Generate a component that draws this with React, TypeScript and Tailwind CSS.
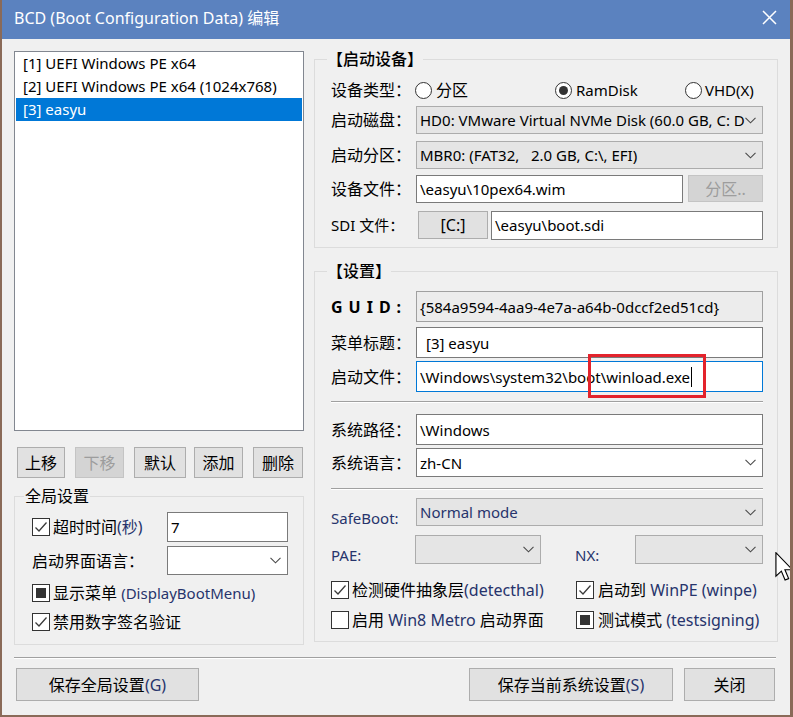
import React from "react";

const font = "font-['Noto_Sans','Noto_Sans_CJK_SC',sans-serif]";
const navy = "text-[#27346c]";

function Chevron() {
  return (
    <svg width="11" height="7" viewBox="0 0 11 7" className="shrink-0">
      <polyline points="0.5,0.8 5.5,5.8 10.5,0.8" fill="none" stroke="#4a4a4a" strokeWidth="1.1" />
    </svg>
  );
}

const Combo = ({
  text,
  className,
  light,
}: {
  text?: React.ReactNode;
  className: string;
  light?: boolean;
}) => (
  <div
    className={`flex items-center pl-[3px] pr-[6px] border ${
      light ? "bg-white border-[#7a7a7a]" : "bg-[#e5e5e5] border-[#acacac]"
    } ${className}`}
  >
    <div className="flex-1 min-w-0 overflow-hidden whitespace-pre text-[15px] leading-[20px]">{text}</div>
    <Chevron />
  </div>
);

const TextBox = ({
  children,
  className,
}: {
  children?: React.ReactNode;
  className: string;
}) => (
  <div
    className={`flex items-center pl-[3px] overflow-hidden whitespace-nowrap text-[15px] leading-[20px] border ${className}`}
  >
    {children}
  </div>
);

const Button = ({
  children,
  className,
  disabled,
}: {
  children: React.ReactNode;
  className: string;
  disabled?: boolean;
}) => (
  <div
    className={`flex items-center justify-center border text-[16px] ${
      disabled
        ? "bg-[#d4d4d4] border-[#c4c4c4] text-[#9d9d9d]"
        : "bg-[#e1e1e1] border-[#adadad] text-black"
    } ${className}`}
  >
    {children}
  </div>
);

const Check = ({ state }: { state: "on" | "off" | "mixed" }) => (
  <span className="w-[18px] h-[18px] border border-[#333333] bg-white flex items-center justify-center shrink-0">
    {state === "on" && (
      <svg width="16" height="16" viewBox="0 0 16 16">
        <polyline points="2.5,8.5 6,12 13.5,3.5" fill="none" stroke="#3a3a3a" strokeWidth="1.3" />
      </svg>
    )}
    {state === "mixed" && <span className="w-[10px] h-[10px] bg-[#333333]" />}
  </span>
);

const Radio = ({ on }: { on?: boolean }) => (
  <span className="w-[17px] h-[17px] rounded-full border border-[#333333] bg-white flex items-center justify-center shrink-0">
    {on && <span className="w-[9px] h-[9px] rounded-full bg-[#333333]" />}
  </span>
);

const Label = ({ children }: { children: React.ReactNode }) => (
  <span className="w-[85px] shrink-0 text-[16px] leading-[20px] whitespace-nowrap">{children}</span>
);

const Sep = ({ className }: { className: string }) => (
  <div className={`h-[2px] border-t border-[#a0a0a0] border-b border-b-white ${className}`} />
);

export default function App() {
  return (
    <div
      className={`${font} relative w-[793px] h-[717px] bg-[#f0f0f0] border-l-2 border-r-[3px] border-b-2 border-[#8a6a58] text-black overflow-hidden`}
    >
      {/* title bar */}
      <div className="h-[39px] bg-[#5b82bf] flex items-center pl-[12px] pr-[13px] text-white">
        <span className="text-[16px] leading-[20px] mb-[3px]">BCD (Boot Configuration Data) 编辑</span>
        <svg width="15" height="15" viewBox="0 0 15 15" className="ml-auto mb-[4px]">
          <path d="M1 1 L14 14 M14 1 L1 14" stroke="white" strokeWidth="1.5" />
        </svg>
      </div>

      <div className="h-[608px] flex pl-[12px]">
        {/* left column */}
        <div className="w-[290px] pt-[12px] flex flex-col">
          <div className="h-[380px] bg-white border border-[#828790] px-[1px] text-[15px]">
            <div className="h-[23px] flex items-center pl-[7px] whitespace-nowrap">[1] UEFI Windows PE x64</div>
            <div className="h-[23px] flex items-center pl-[7px] whitespace-nowrap">[2] UEFI Windows PE x64 (1024x768)</div>
            <div className="h-[23px] flex items-center pl-[7px] whitespace-nowrap bg-[#0078d7] text-white">[3] easyu</div>
          </div>

          <div className="flex mt-[16px] h-[31px] pl-[3px]">
            <Button className="w-[48px]">上移</Button>
            <Button className="w-[49px] ml-[10px]" disabled>下移</Button>
            <Button className="w-[52px] ml-[10px]">默认</Button>
            <Button className="w-[49px] ml-[8px]">添加</Button>
            <Button className="w-[50px] ml-[10px]">删除</Button>
          </div>

          <fieldset className="mt-[8px] border border-[#dcdcdc] pl-[17px] pr-[15px] pb-[10px]">
            <legend className="ml-[-8px] px-[1px] text-[16px] leading-[20px]">全局设置</legend>
            <div className="flex items-center h-[30px] mt-[6px]">
              <Check state="on" />
              <span className="ml-[3px] text-[16px] whitespace-nowrap">
                超时时间<span className={navy}>(秒)</span>
              </span>
              <TextBox className="ml-auto w-[121px] h-[30px] bg-white border-[#7a7a7a]">7</TextBox>
            </div>
            <div className="flex items-center h-[29px] mt-[4px]">
              <span className="text-[16px] whitespace-nowrap">启动界面语言：</span>
              <Combo className="ml-auto w-[121px] h-[29px]" light />
            </div>
            <div className="flex items-center h-[24px] mt-[6px]">
              <Check state="mixed" />
              <span className="ml-[3px] text-[16px] whitespace-nowrap">
                显示菜单 <span className={`${navy} text-[15px]`}>(DisplayBootMenu)</span>
              </span>
            </div>
            <div className="flex items-center h-[24px] mt-[5px]">
              <Check state="on" />
              <span className="ml-[3px] text-[16px] whitespace-nowrap">禁用数字签名验证</span>
            </div>
          </fieldset>
        </div>

        {/* right column */}
        <div className="w-[464px] ml-[10px] pt-[10px] flex flex-col">
          <fieldset className="border border-[#dcdcdc] pl-[16px] pr-[14px] pb-[8px]">
            <legend className="ml-[-4px] text-[16px] leading-[20px] font-medium">【启动设备】</legend>
            <div className="flex items-center h-[24px] mt-[9px]">
              <Label>设备类型：</Label>
              <div className="w-[140px] flex items-center ml-[-1px]">
                <Radio />
                <span className="ml-[4px] text-[16px]">分区</span>
              </div>
              <div className="w-[130px] flex items-center">
                <Radio on />
                <span className="ml-[4px] text-[15px]">RamDisk</span>
              </div>
              <div className="flex items-center">
                <Radio />
                <span className="ml-[3px] text-[15px]">VHD(X)</span>
              </div>
            </div>
            <div className="flex items-center h-[28px] mt-[4px]">
              <Label>启动磁盘：</Label>
              <Combo className="w-[347px] h-[28px]" text="HD0: VMware Virtual NVMe Disk (60.0 GB, C: D" />
            </div>
            <div className="flex items-center h-[28px] mt-[7px]">
              <Label>启动分区：</Label>
              <Combo className="w-[347px] h-[28px]" text="MBR0: (FAT32,   2.0 GB, C:\, EFI)" />
            </div>
            <div className="flex items-center h-[28px] mt-[6px]">
              <Label>设备文件：</Label>
              <TextBox className="w-[267px] h-[28px] bg-white border-[#7a7a7a]">\easyu\10pex64.wim</TextBox>
              <Button className="w-[75px] h-[27px] ml-[5px] self-start text-[15px]" disabled>分区..</Button>
            </div>
            <div className="flex items-center h-[28px] mt-[8px]">
              <span className="w-[87px] shrink-0 text-[15px] whitespace-nowrap">SDI 文件：</span>
              <Button className="w-[70px] h-[28px] text-[15px]">[C:]</Button>
              <TextBox className="w-[272px] h-[29px] ml-[3px] bg-white border-[#7a7a7a]">\easyu\boot.sdi</TextBox>
            </div>
          </fieldset>

          <fieldset className="mt-[13px] border border-[#dcdcdc] pl-[16px] pr-[14px] pb-[9px]">
            <legend className="ml-[-4px] text-[16px] leading-[20px] font-medium">【设置】</legend>
            <div className="flex items-center h-[31px] mt-[10px]">
              <span className="w-[85px] shrink-0 text-[16px] font-bold tracking-[6px] whitespace-nowrap">GUID:</span>
              <TextBox className="w-[347px] h-[31px] bg-[#ececec] border-[#a0a0a0]">
                {"{584a9594-4aa9-4e7a-a64b-0dccf2ed51cd}"}
              </TextBox>
            </div>
            <div className="flex items-center h-[31px] mt-[5px]">
              <Label>菜单标题：</Label>
              <TextBox className="w-[347px] h-[31px] bg-white border-[#7a7a7a] pl-[9px]">[3] easyu</TextBox>
            </div>
            <div className="flex items-center h-[31px] mt-[3px]">
              <Label>启动文件：</Label>
              <TextBox className="w-[347px] h-[31px] bg-white border-[#0078d7]">
                \Windows\system32\boot\winload.exe
                <span className="inline-block w-[1px] h-[20px] bg-black ml-[1px]" />
              </TextBox>
            </div>
            <Sep className="mt-[9px]" />
            <div className="flex items-center h-[31px] mt-[11px]">
              <Label>系统路径：</Label>
              <TextBox className="w-[347px] h-[31px] bg-white border-[#7a7a7a]">\Windows</TextBox>
            </div>
            <div className="flex items-center h-[29px] mt-[3px]">
              <Label>系统语言：</Label>
              <Combo className="w-[347px] h-[29px]" light text="zh-CN" />
            </div>
            <Sep className="mt-[11px]" />
            <div className="flex items-start h-[28px] mt-[8px]">
              <span className={`w-[85px] shrink-0 text-[15px] leading-[20px] mt-[10px] ${navy}`}>SafeBoot:</span>
              <Combo className="w-[347px] h-[28px]" text={<span className={navy}>Normal mode</span>} />
            </div>
            <div className="flex items-start h-[29px] mt-[9px]">
              <span className={`w-[84px] shrink-0 text-[15px] leading-[20px] mt-[10px] ${navy}`}>PAE:</span>
              <Combo className="w-[126px] h-[29px]" />
              <span className={`ml-[34px] w-[60px] shrink-0 text-[15px] leading-[20px] mt-[10px] ${navy}`}>NX:</span>
              <Combo className="w-[128px] h-[29px]" />
            </div>
            <div className="flex items-center h-[24px] mt-[14px]">
              <div className="w-[245px] flex items-center">
                <Check state="on" />
                <span className="ml-[3px] text-[16px] whitespace-nowrap">
                  检测硬件抽象层<span className={navy}>(detecthal)</span>
                </span>
              </div>
              <Check state="on" />
              <span className="ml-[4px] text-[16px] whitespace-nowrap">
                启动到 <span className={navy}>WinPE (winpe)</span>
              </span>
            </div>
            <div className="flex items-center h-[24px] mt-[6px]">
              <div className="w-[245px] flex items-center">
                <Check state="off" />
                <span className="ml-[3px] text-[16px] whitespace-nowrap">
                  启用 <span className={navy}>Win8 Metro</span> 启动界面
                </span>
              </div>
              <Check state="mixed" />
              <span className="ml-[4px] text-[16px] whitespace-nowrap">
                测试模式 <span className={navy}>(testsigning)</span>
              </span>
            </div>
          </fieldset>
        </div>
      </div>

      {/* bottom */}
      <Sep className="mt-[10px] ml-[12px] w-[762px]" />
      <div className="flex mt-[9px] h-[33px] pl-[14px]">
        <Button className="w-[183px]">
          保存全局设置<span className={navy}>(G)</span>
        </Button>
        <Button className="w-[204px] ml-[270px]">
          保存当前系统设置<span className={navy}>(S)</span>
        </Button>
        <Button className="w-[91px] ml-[11px]">关闭</Button>
      </div>

      {/* highlight box */}
      <div className="absolute left-[586px] top-[354px] w-[118px] h-[44px] border-[3px] border-[#e3232c]" />

      {/* mouse cursor */}
      <svg className="absolute left-[773px] top-[552px]" width="19" height="30" viewBox="0 0 13 21">
        <path d="M0.5 0.5 L0.5 17 L4.3 13.4 L6.9 19.6 L9.4 18.6 L6.8 12.4 L12 12.4 Z" fill="white" stroke="black" strokeWidth="0.8" />
      </svg>
    </div>
  );
}
